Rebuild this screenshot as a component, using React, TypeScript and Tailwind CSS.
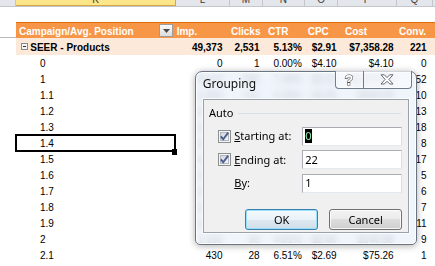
import React from "react";

const rows = [
  ["0", "0", "1", "0.00%", "$4.10", "$4.10", "0"],
  ["1", "8,112", "596", "7.35%", "$3.31", "$1,972.84", "52"],
  ["1.1", "1,904", "121", "6.36%", "$3.05", "$369.05", "10"],
  ["1.2", "2,487", "163", "6.55%", "$2.98", "$485.74", "13"],
  ["1.3", "3,316", "201", "6.06%", "$2.93", "$588.93", "18"],
  ["1.4", "2,951", "137", "4.64%", "$2.87", "$393.19", "8"],
  ["1.5", "4,228", "196", "4.64%", "$2.79", "$546.84", "17"],
  ["1.6", "3,145", "118", "3.75%", "$2.74", "$323.32", "5"],
  ["1.7", "2,806", "102", "3.64%", "$2.70", "$275.40", "6"],
  ["1.8", "2,214", "87", "3.93%", "$2.64", "$229.68", "7"],
  ["1.9", "1,873", "94", "5.02%", "$2.58", "$242.52", "11"],
  ["2", "1,102", "53", "4.81%", "$2.66", "$140.98", "9"],
  ["2.1", "430", "28", "6.51%", "$2.69", "$75.26", "1"],
];

const headers = ["Imp.", "Clicks", "CTR", "CPC", "Cost", "Conv."];
const seer = ["49,373", "2,531", "5.13%", "$2.91", "$7,358.28", "221"];
const letters = ["L", "M", "N", "O", "P", "Q"];

// column widths, L..Q
const colW = ["w-[54px]", "w-[32.7px]", "w-[42.3px]", "w-[33.3px]", "w-[58.4px]", "w-[36.3px]"];
const dataPr = ["pr-[7.5px]", "pr-[3.2px]", "pr-[3.2px]", "pr-[1.6px]", "pr-[3px]", "pr-[6.3px]"];
const headPl = ["pl-[0.7px]", "pl-[1px]", "pl-[5.3px]", "pl-[2.7px]", "pl-[6.7px]", "pl-[2.3px]"];

function ColumnBar() {
  return (
    <div className="flex h-[7px] overflow-hidden border-b border-[#c3c6ca] bg-[#e3e6ea] text-[10px] leading-[10px] text-[#3c3c3c]">
      <div className="w-[16px] border-r border-[#c3c6ca]" />
      <div className="flex w-[160px] justify-center border-r border-b border-[#d6a73c] bg-[#fde68a]">
        <span className="-mt-[5px]">K</span>
      </div>
      {letters.map((l, i) => (
        <div key={l} className={`${colW[i]} flex justify-center border-r border-[#c3c6ca]`}>
          <span className="-mt-[5px]">{l}</span>
        </div>
      ))}
      <div className="flex-1" />
    </div>
  );
}

function HeaderRow() {
  return (
    <div className="flex h-[16.6px]">
      <div className="w-[16px] border-b border-[#b9b9b9]" />
      <div className="flex flex-1 border-t-[1.5px] border-[#e26b0a] bg-[#f79646] font-bold leading-[17.5px] text-white">
        <div className="flex w-[160px] justify-between pl-[3px] pr-[2.7px]">
          <span>Campaign/Avg. Position</span>
          <div className="mt-[1.5px] flex h-[12.7px] w-[14.3px] items-center justify-center border border-[#9c9c9c] bg-linear-to-b from-[#fbfbfb] to-[#dcdcdc]">
            <svg width="7" height="4" viewBox="0 0 7 4">
              <path d="M0 0 H7 L3.5 4 Z" fill="#4a4a4a" />
            </svg>
          </div>
        </div>
        {headers.map((h, i) => (
          <div key={h} className={`${colW[i]} ${headPl[i]}`}>
            {h}
          </div>
        ))}
        <div className="flex-1" />
      </div>
    </div>
  );
}

function SeerRow() {
  return (
    <div className="flex h-[16.7px]">
      <div className="w-[16px]" />
      <div className="flex flex-1 bg-[#fde9d9] font-bold leading-[20px]">
        <div className="flex w-[160px] items-start pl-[4.7px]">
          <div className="mt-[5px] mr-[2.6px] flex h-[7px] w-[7px] items-center justify-center border border-[#8a8a8a] bg-[#f4f4f4]">
            <div className="h-px w-[3px] bg-[#333]" />
          </div>
          <span>SEER - Products</span>
        </div>
        {seer.map((v, i) => (
          <div key={i} className={`${colW[i]} ${dataPr[i]} text-right`}>
            {v}
          </div>
        ))}
        <div className="flex-1" />
      </div>
    </div>
  );
}

function DataRow({ r, sel }: { r: string[]; sel?: boolean }) {
  return (
    <div className="flex h-[16px] leading-[18.5px]">
      <div className="w-[16px]" />
      <div className="relative w-[160px] pl-[24px]">
        {r[0]}
        {sel && (
          <>
            <div className="absolute -top-[1px] -bottom-[1px] -left-[1px] right-0 border-2 border-black" />
            <div className="absolute -right-[1px] -bottom-[4px] h-[6px] w-[5px] bg-black" />
          </>
        )}
      </div>
      {r.slice(1).map((v, i) => (
        <div key={i} className={`${colW[i]} ${dataPr[i]} text-right`}>
          {v}
        </div>
      ))}
      <div className="flex-1" />
    </div>
  );
}

function CheckBox() {
  return (
    <svg width="13" height="13" viewBox="0 0 13 13" className="shrink-0">
      <defs>
        <linearGradient id="cbfill" x1="0" y1="0" x2="1" y2="1">
          <stop offset="0" stopColor="#cfd3d8" />
          <stop offset="1" stopColor="#f8f8f8" />
        </linearGradient>
      </defs>
      <rect x="0.5" y="0.5" width="12" height="12" fill="#f5f5f5" stroke="#8e8f8f" />
      <rect x="2.5" y="2.5" width="8" height="8" fill="url(#cbfill)" stroke="#b4b8be" />
      <path d="M2.8 6.4 L5.2 9.2 L10.2 2.6" fill="none" stroke="#4a5f90" strokeWidth="1.9" />
    </svg>
  );
}

function Field({ label, mnemonic, value, checked, selected }: { label: string; mnemonic: string; value: string; checked?: boolean; selected?: boolean }) {
  return (
    <div className="flex h-[19px] items-center">
      <div className="ml-[14.3px] w-[13px]">{checked && <CheckBox />}</div>
      <span className="ml-[3.3px]">
        <span className="underline underline-offset-[1px]">{mnemonic}</span>
        {label}
      </span>
      <div className="ml-auto flex h-[19px] w-[100.6px] items-center border border-[#abadb3] border-r-[#dbdfe6] border-b-[#e3e9ef] bg-white pl-[2.6px]">
        {selected ? <span className="bg-black leading-[14px] text-[#8ff0b0]">{value}</span> : value}
      </div>
    </div>
  );
}

function Dialog() {
  return (
    <div className="absolute top-[71px] left-[195px] flex h-[174px] w-[222px] flex-col rounded-t-[7px] rounded-b-[5px] border border-[#6b7480] bg-[rgba(236,243,251,0.8)] shadow-[0_1px_7px_rgba(0,0,0,0.32),inset_0_0_0_1px_rgba(255,255,255,0.75)] backdrop-blur-[3.5px] font-['Noto_Sans',sans-serif] text-[11px] text-black">
      <div className="flex h-[27.3px] shrink-0 items-start justify-between">
        <span className="pt-[4px] pl-[6.7px] text-[12px] leading-[16px] text-[#111]">Grouping</span>
        <div className="mr-[4.3px] -mt-[1.3px] flex h-[18.6px] w-[76.7px] rounded-b-[4px] border border-t-0 border-[#6f7c8b] bg-[rgba(255,255,255,0.3)] shadow-[inset_0_0_0_1px_rgba(255,255,255,0.55)]">
          <div className="flex w-[27.5px] items-center justify-center border-r border-[#6f7c8b]">
            <svg width="12" height="14" viewBox="0 0 12 14">
              <text x="6" y="12" textAnchor="middle" fontSize="14" fontWeight="bold" fontFamily="Liberation Sans, Arial, sans-serif" fill="#ffffff" stroke="#4c4c4c" strokeWidth="1.1" paintOrder="stroke">?</text>
            </svg>
          </div>
          <div className="flex flex-1 items-center justify-center">
            <svg width="14" height="11" viewBox="0 0 14 11">
              <polygon points="1,0.8 4.3,0.8 7,3.6 9.7,0.8 13,0.8 8.9,5.4 13,10 9.7,10 7,7.2 4.3,10 1,10 5.1,5.4" fill="#ffffff" stroke="#555b63" strokeWidth="0.9" strokeLinejoin="round" />
            </svg>
          </div>
        </div>
      </div>
      <div className="mx-[6.7px] flex h-[133.7px] flex-col border border-[#9aa1a9] bg-[#f0f0f0] pr-[6px] shadow-[0_0_0_1px_rgba(255,255,255,0.7)]">
        <div className="mt-[6px] flex h-[14px] items-center leading-[14px]">
          <span className="pl-[5.3px]">Auto</span>
          <div className="ml-[5px] mr-[1px] h-px flex-1 bg-[#d5dfe5]" />
        </div>
        <div className="mt-[6.7px] flex flex-col gap-[4.3px] leading-[14px]">
          <Field mnemonic="S" label="tarting at:" value="0" checked selected />
          <Field mnemonic="E" label="nding at:" value="22" checked />
          <Field mnemonic="B" label="y:" value="1" />
        </div>
        <div className="mt-[16.7px] flex justify-end gap-[11px]">
          <button className="h-[20.7px] w-[72.6px] rounded-[3px] border border-[#3c7fb1] bg-[linear-gradient(to_bottom,#f4fafd_0%,#e9f2f8_50%,#dde8f0_50%,#d2dee8_100%)] leading-[14px] shadow-[inset_0_0_0_1px_#98e0fa]">
            OK
          </button>
          <button className="h-[20.7px] w-[73.4px] rounded-[3px] border border-[#707070] bg-[linear-gradient(to_bottom,#f2f2f2_0%,#ebebeb_50%,#dddddd_50%,#cfcfcf_100%)] leading-[14px] shadow-[inset_0_0_0_1px_rgba(255,255,255,0.8)]">
            Cancel
          </button>
        </div>
      </div>
    </div>
  );
}

export default function App() {
  return (
    <div className="relative h-[266px] w-[435px] overflow-hidden bg-white font-['Liberation_Sans',Arial,sans-serif] text-[10px] text-black">
      <ColumnBar />
      <div className="h-[14.7px]" />
      <HeaderRow />
      <SeerRow />
      {rows.map((r, i) => (
        <DataRow key={r[0]} r={r} sel={i === 5} />
      ))}
      <Dialog />
    </div>
  );
}
